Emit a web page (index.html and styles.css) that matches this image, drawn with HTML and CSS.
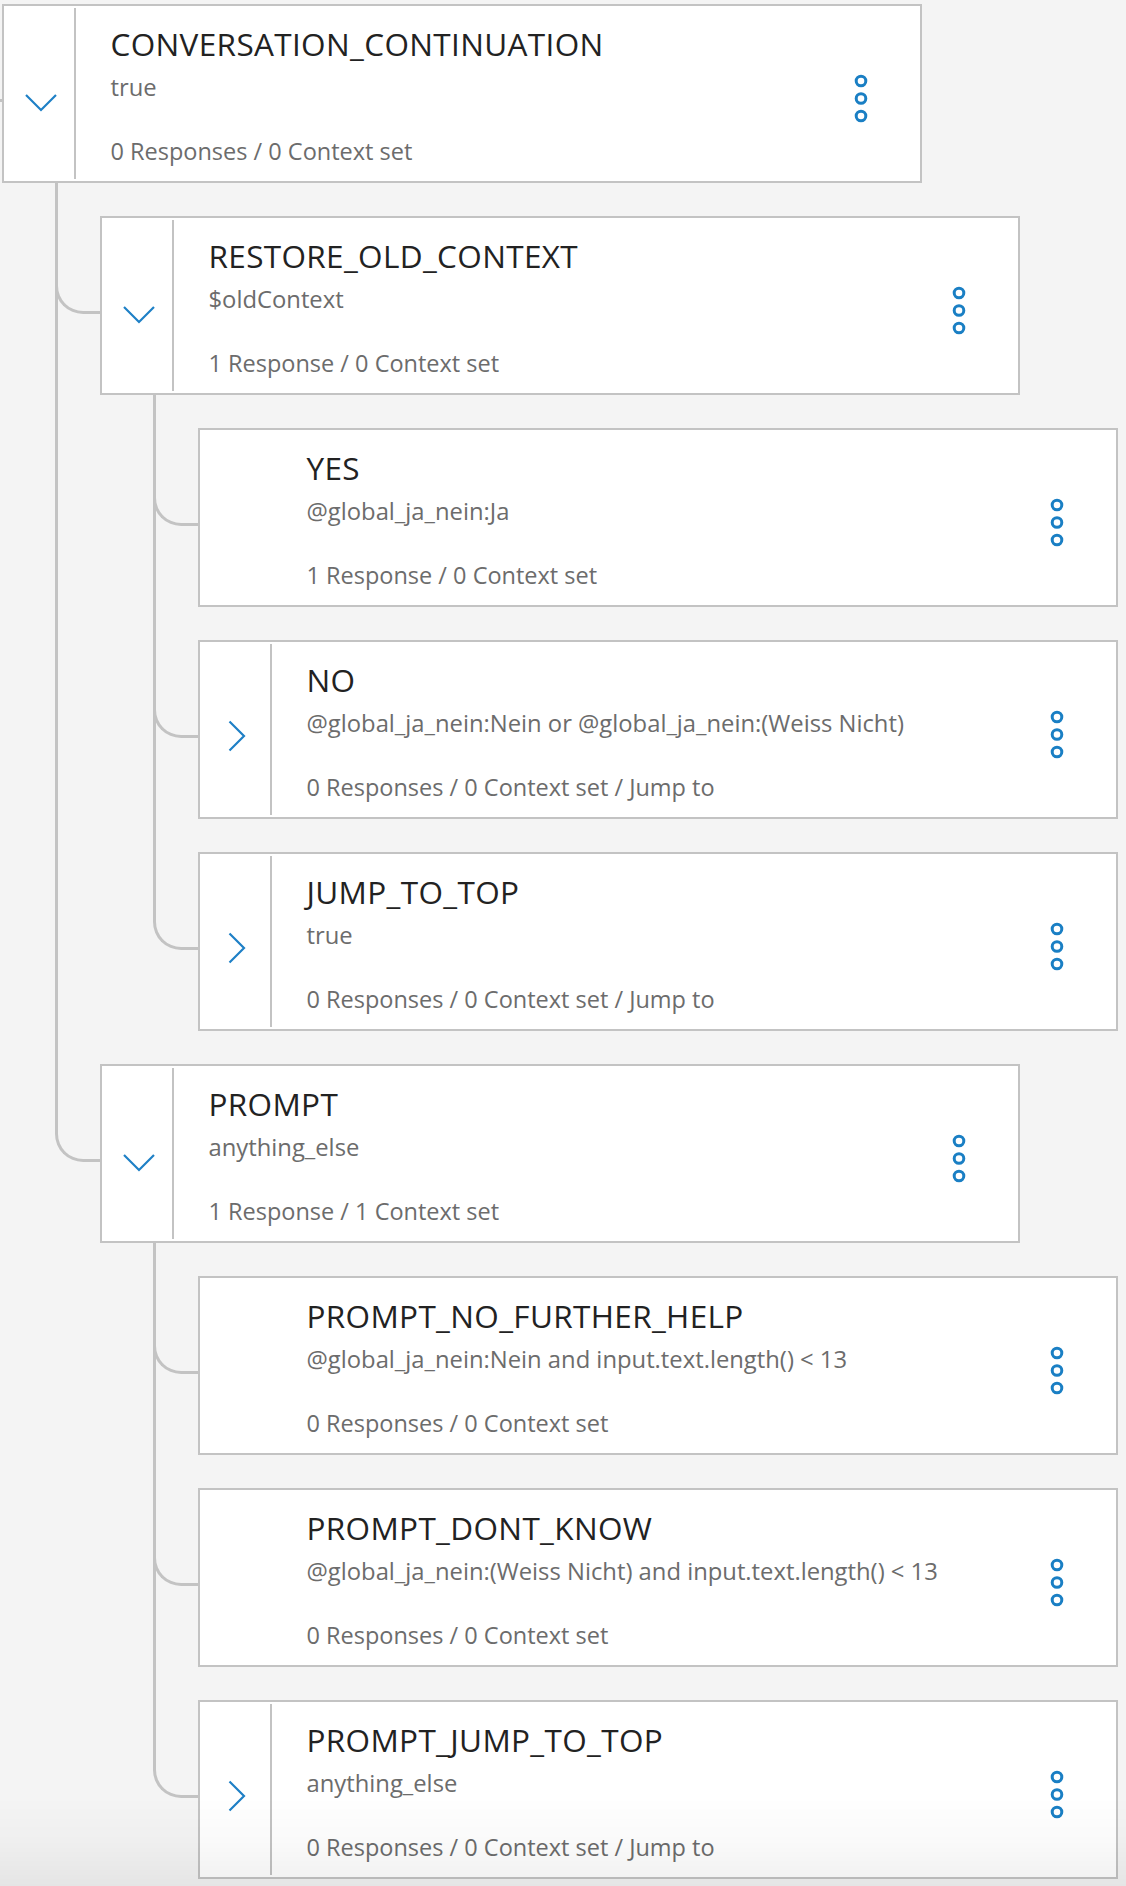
FILE: index.html
```html
<!DOCTYPE html>
<html lang="en">
<head>
<meta charset="utf-8">
<title>Dialog tree</title>
<link rel="stylesheet" href="styles.css">
</head>
<body>
<ul class="tree">
  <li class="node">
    <div class="card">
      <div class="toggle"><svg class="chev" viewBox="0 0 32 32"><path d="M1 11 L16 26 L31 11"/></svg></div>
      <div class="info">
        <div class="title">CONVERSATION_CONTINUATION</div>
        <div class="cond">true</div>
        <div class="stats">0 Responses / 0 Context set</div>
      </div>
      <div class="menu"><svg viewBox="0 0 16 52"><circle cx="8" cy="8" r="4.8"/><circle cx="8" cy="25.5" r="4.8"/><circle cx="8" cy="43" r="4.8"/></svg></div>
    </div>
    <ul class="children">
      <li class="node">
        <div class="card">
          <div class="toggle"><svg class="chev" viewBox="0 0 32 32"><path d="M1 11 L16 26 L31 11"/></svg></div>
          <div class="info">
            <div class="title">RESTORE_OLD_CONTEXT</div>
            <div class="cond">$oldContext</div>
            <div class="stats">1 Response / 0 Context set</div>
          </div>
          <div class="menu"><svg viewBox="0 0 16 52"><circle cx="8" cy="8" r="4.8"/><circle cx="8" cy="25.5" r="4.8"/><circle cx="8" cy="43" r="4.8"/></svg></div>
        </div>
        <ul class="children">
          <li class="node">
            <div class="card">
              <div class="toggle empty"></div>
              <div class="info">
                <div class="title">YES</div>
                <div class="cond">@global_ja_nein:Ja</div>
                <div class="stats">1 Response / 0 Context set</div>
              </div>
              <div class="menu"><svg viewBox="0 0 16 52"><circle cx="8" cy="8" r="4.8"/><circle cx="8" cy="25.5" r="4.8"/><circle cx="8" cy="43" r="4.8"/></svg></div>
            </div>
          </li>
          <li class="node">
            <div class="card">
              <div class="toggle"><svg class="chev" viewBox="0 0 32 32"><path d="M8.5 1.5 L23 16 L8.5 30.5"/></svg></div>
              <div class="info">
                <div class="title">NO</div>
                <div class="cond">@global_ja_nein:Nein or @global_ja_nein:(Weiss Nicht)</div>
                <div class="stats">0 Responses / 0 Context set / Jump to</div>
              </div>
              <div class="menu"><svg viewBox="0 0 16 52"><circle cx="8" cy="8" r="4.8"/><circle cx="8" cy="25.5" r="4.8"/><circle cx="8" cy="43" r="4.8"/></svg></div>
            </div>
          </li>
          <li class="node">
            <div class="card">
              <div class="toggle"><svg class="chev" viewBox="0 0 32 32"><path d="M8.5 1.5 L23 16 L8.5 30.5"/></svg></div>
              <div class="info">
                <div class="title">JUMP_TO_TOP</div>
                <div class="cond">true</div>
                <div class="stats">0 Responses / 0 Context set / Jump to</div>
              </div>
              <div class="menu"><svg viewBox="0 0 16 52"><circle cx="8" cy="8" r="4.8"/><circle cx="8" cy="25.5" r="4.8"/><circle cx="8" cy="43" r="4.8"/></svg></div>
            </div>
          </li>
        </ul>
      </li>
      <li class="node">
        <div class="card">
          <div class="toggle"><svg class="chev" viewBox="0 0 32 32"><path d="M1 11 L16 26 L31 11"/></svg></div>
          <div class="info">
            <div class="title">PROMPT</div>
            <div class="cond">anything_else</div>
            <div class="stats">1 Response / 1 Context set</div>
          </div>
          <div class="menu"><svg viewBox="0 0 16 52"><circle cx="8" cy="8" r="4.8"/><circle cx="8" cy="25.5" r="4.8"/><circle cx="8" cy="43" r="4.8"/></svg></div>
        </div>
        <ul class="children">
          <li class="node">
            <div class="card">
              <div class="toggle empty"></div>
              <div class="info">
                <div class="title">PROMPT_NO_FURTHER_HELP</div>
                <div class="cond">@global_ja_nein:Nein and input.text.length() &lt; 13</div>
                <div class="stats">0 Responses / 0 Context set</div>
              </div>
              <div class="menu"><svg viewBox="0 0 16 52"><circle cx="8" cy="8" r="4.8"/><circle cx="8" cy="25.5" r="4.8"/><circle cx="8" cy="43" r="4.8"/></svg></div>
            </div>
          </li>
          <li class="node">
            <div class="card">
              <div class="toggle empty"></div>
              <div class="info">
                <div class="title">PROMPT_DONT_KNOW</div>
                <div class="cond">@global_ja_nein:(Weiss Nicht) and input.text.length() &lt; 13</div>
                <div class="stats">0 Responses / 0 Context set</div>
              </div>
              <div class="menu"><svg viewBox="0 0 16 52"><circle cx="8" cy="8" r="4.8"/><circle cx="8" cy="25.5" r="4.8"/><circle cx="8" cy="43" r="4.8"/></svg></div>
            </div>
          </li>
          <li class="node">
            <div class="card">
              <div class="toggle"><svg class="chev" viewBox="0 0 32 32"><path d="M8.5 1.5 L23 16 L8.5 30.5"/></svg></div>
              <div class="info">
                <div class="title">PROMPT_JUMP_TO_TOP</div>
                <div class="cond">anything_else</div>
                <div class="stats">0 Responses / 0 Context set / Jump to</div>
              </div>
              <div class="menu"><svg viewBox="0 0 16 52"><circle cx="8" cy="8" r="4.8"/><circle cx="8" cy="25.5" r="4.8"/><circle cx="8" cy="43" r="4.8"/></svg></div>
            </div>
          </li>
        </ul>
      </li>
    </ul>
  </li>
</ul>
<div class="fade"></div>
</body>
</html>
```

FILE: styles.css
```css
html, body {
  margin: 0;
  background: #f4f4f4;
}
body {
  padding: 4px 0 0 2px;
  font-family: "Open Sans", "Noto Sans", sans-serif;
  height: 1886px;
  box-sizing: border-box;
  overflow: hidden;
}
.tree, .children {
  list-style: none;
  margin: 0;
  padding: 0;
}
.children {
  margin-left: 98px;
}
.node {
  position: relative;
}
.children > .node {
  margin-top: 33px;
}
/* elbow connectors */
.children > .node::before {
  content: "";
  position: absolute;
  left: -45px;
  top: -33px;
  width: 45px;
  height: 131px;
  box-sizing: border-box;
  border-left: 3px solid #c3c3c3;
  border-bottom: 3px solid #c3c3c3;
  border-bottom-left-radius: 28px;
}
.children > .node:not(:last-child)::after {
  content: "";
  position: absolute;
  left: -45px;
  top: 0;
  bottom: 0;
  width: 3px;
  background: #c3c3c3;
}
.tree > .node::before {
  content: "";
  position: absolute;
  left: -2px;
  top: 95px;
  width: 2px;
  height: 3px;
  background: #c3c3c3;
}
.card {
  display: flex;
  width: 920px;
  height: 179px;
  box-sizing: border-box;
  border: 2px solid #c3c3c3;
  background: #fff;
}
.toggle {
  flex: none;
  width: 72px;
  margin: 2px 0;
  padding-top: 76px;
  padding-left: 3px;
  box-sizing: border-box;
  border-right: 2px solid #c3c3c3;
  display: flex;
  justify-content: center;
  align-items: flex-start;
}
.toggle.empty {
  border-right-color: transparent;
}
.chev {
  width: 32px;
  height: 32px;
  fill: none;
  stroke: #1f80c6;
  stroke-width: 2.2;
}
.info {
  flex: 1;
  min-width: 0;
  padding-left: 34.5px;
  padding-top: 17.5px;
  white-space: nowrap;
}
.title {
  font-size: 31.5px;
  line-height: 40px;
  color: #222;
  letter-spacing: 0.35px;
}
.cond {
  margin-top: 8.6px;
  font-size: 23.8px;
  line-height: 30px;
  color: #6c6c6c;
}
.stats {
  margin-top: 34px;
  font-size: 23.5px;
  line-height: 30px;
  color: #6c6c6c;
}
.menu {
  flex: none;
  width: 16px;
  margin-right: 51.5px;
  padding-top: 66.5px;
}
.menu svg {
  display: block;
  width: 16px;
  height: 52px;
  fill: none;
  stroke: #1a7fc4;
  stroke-width: 3;
}
.fade {
  position: fixed;
  left: 0;
  right: 0;
  bottom: 0;
  height: 90px;
  pointer-events: none;
  background: linear-gradient(to bottom, rgba(0,0,0,0) 0%, rgba(0,0,0,0.02) 50%, rgba(0,0,0,0.06) 100%);
}
```
